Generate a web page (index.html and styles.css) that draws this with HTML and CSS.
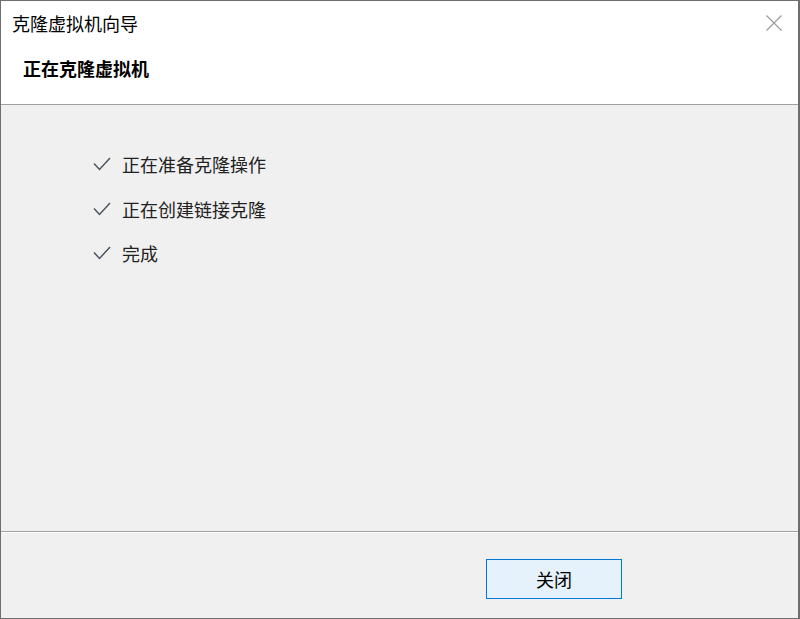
FILE: index.html
```html
<!DOCTYPE html>
<html lang="zh-CN">
<head>
<meta charset="utf-8">
<title>克隆虚拟机向导</title>
<link rel="stylesheet" href="styles.css">
</head>
<body>
<div class="window">
  <div class="top">
    <div class="titlebar">
      <span class="title">克隆虚拟机向导</span>
      <svg class="close" width="16" height="16" viewBox="0 0 16 16"><path d="M0.5 0.5 L15.5 15.5 M15.5 0.5 L0.5 15.5" stroke="#999" stroke-width="1.1" fill="none"/></svg>
    </div>
    <div class="subtitle">正在克隆虚拟机</div>
  </div>
  <div class="content">
    <ul class="steps">
      <li class="step"><svg class="check" width="18" height="14" viewBox="0 0 18 14"><path d="M1 6.5 L6.5 12.5 L17 1" stroke="#4b5560" stroke-width="1.5" fill="none"/></svg><span>正在准备克隆操作</span></li>
      <li class="step"><svg class="check" width="18" height="14" viewBox="0 0 18 14"><path d="M1 6.5 L6.5 12.5 L17 1" stroke="#4b5560" stroke-width="1.5" fill="none"/></svg><span>正在创建链接克隆</span></li>
      <li class="step"><svg class="check" width="18" height="14" viewBox="0 0 18 14"><path d="M1 6.5 L6.5 12.5 L17 1" stroke="#4b5560" stroke-width="1.5" fill="none"/></svg><span>完成</span></li>
    </ul>
  </div>
  <div class="footer">
    <button class="btn">关闭</button>
  </div>
</div>
</body>
</html>
```
FILE: styles.css
```css
html, body {
  margin: 0;
  padding: 0;
  background: #f0f0f0;
}
body {
  font-family: "Noto Sans CJK SC", "Noto Sans", sans-serif;
  color: #000;
}
.window {
  width: 800px;
  height: 619px;
  box-sizing: border-box;
  border: 1px solid #6e6e6e;
  border-right-width: 2px;
  display: flex;
  flex-direction: column;
  background: #f0f0f0;
}
.top {
  background: #fff;
  height: 103px;
  border-bottom: 1px solid #a0a0a0;
  display: flex;
  flex-direction: column;
}
.titlebar {
  height: 43px;
  display: flex;
  align-items: center;
  justify-content: space-between;
  padding: 0 16px 0 11px;
}
.title {
  font-size: 18px;
  line-height: 20px;
  margin-top: 1px;
}
.close {
  display: block;
  margin-top: 0;
}
.subtitle {
  font-size: 18px;
  font-weight: bold;
  line-height: 20px;
  padding-left: 22px;
  margin-top: 14px;
}
.content {
  flex: 1;
  padding-top: 49px;
}
.steps {
  list-style: none;
  margin: 0;
  padding: 0 0 0 92px;
  display: flex;
  flex-direction: column;
  gap: 24.5px;
}
.step {
  display: flex;
  align-items: center;
  height: 20px;
  font-size: 18px;
  line-height: 20px;
  color: #222;
}
.check {
  display: block;
  margin-right: 11px;
  margin-top: 0;
}
.footer {
  height: 87px;
  border-top: 1px solid #a0a0a0;
  box-shadow: inset 0 1px 0 #ffffff;
  box-sizing: border-box;
  padding: 27px 0 0 485px;
}
.btn {
  display: block;
  width: 136px;
  height: 40px;
  box-sizing: border-box;
  background: #e5f1fb;
  border: 1px solid #0078d7;
  font-family: "Noto Sans CJK SC", sans-serif;
  font-size: 18px;
  color: #000;
  padding: 0;
  margin: 0;
}
```
